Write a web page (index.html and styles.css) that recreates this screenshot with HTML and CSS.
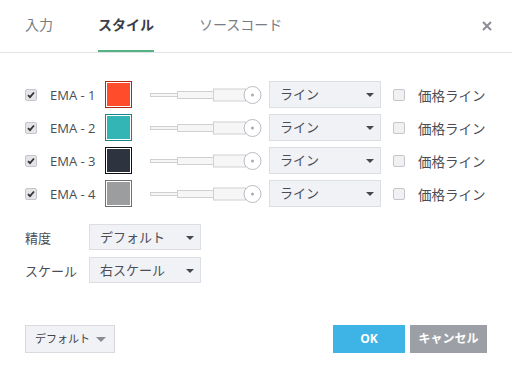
FILE: index.html
```html
<!DOCTYPE html>
<html>
    <head>
        <title>スタイル</title>
        <meta http-equiv="Content-Type" content="text/html; charset=UTF-8">
        <link rel="stylesheet" href="styles.css">
    </head>
    <body>
        <div class="dialog">
            <div class="header">
                <div class="tab">入力</div>
                <div class="tab active">スタイル</div>
                <div class="tab">ソースコード</div>
                <div class="close">
                    <svg width="10" height="10" viewBox="0 0 10 10"><path d="M1 1L9 9M9 1L1 9" stroke="#8a8d94" stroke-width="2"/></svg>
                </div>
            </div>

            <div class="content">
                <div class="rows">
                    <div class="row">
                        <span class="check on"><svg width="8" height="8" viewBox="0 0 8 8"><path d="M1 4.2L3 6.2L7 1.5" fill="none" stroke="#333" stroke-width="1.8"/></svg></span>
                        <span class="ema">EMA - 1</span>
                        <span class="swatch orange"><i></i></span>
                        <svg class="slider" width="112" height="20" viewBox="0 0 112 20">
                            <rect x="0.5" y="8.5" width="27" height="3" fill="#f6f6f6" stroke="#d0d0d0"/>
                            <rect x="27.5" y="6.5" width="36" height="7" fill="#f6f6f6" stroke="#d0d0d0"/>
                            <rect x="63.5" y="4" width="32" height="12" fill="#f6f6f6" stroke="#d0d0d0"/>
                            <circle cx="102.5" cy="10" r="8.5" fill="#fff" stroke="#b8bbc2"/>
                            <circle cx="102.5" cy="10" r="1.5" fill="#a8abb2"/>
                        </svg>
                        <div class="select wide">ライン<span class="arrow"></span></div>
                        <span class="check"></span>
                        <span class="price">価格ライン</span>
                    </div>
                    <div class="row">
                        <span class="check on"><svg width="8" height="8" viewBox="0 0 8 8"><path d="M1 4.2L3 6.2L7 1.5" fill="none" stroke="#333" stroke-width="1.8"/></svg></span>
                        <span class="ema">EMA - 2</span>
                        <span class="swatch teal"><i></i></span>
                        <svg class="slider" width="112" height="20" viewBox="0 0 112 20">
                            <rect x="0.5" y="8.5" width="27" height="3" fill="#f6f6f6" stroke="#d0d0d0"/>
                            <rect x="27.5" y="6.5" width="36" height="7" fill="#f6f6f6" stroke="#d0d0d0"/>
                            <rect x="63.5" y="4" width="32" height="12" fill="#f6f6f6" stroke="#d0d0d0"/>
                            <circle cx="102.5" cy="10" r="8.5" fill="#fff" stroke="#b8bbc2"/>
                            <circle cx="102.5" cy="10" r="1.5" fill="#a8abb2"/>
                        </svg>
                        <div class="select wide">ライン<span class="arrow"></span></div>
                        <span class="check"></span>
                        <span class="price">価格ライン</span>
                    </div>
                    <div class="row">
                        <span class="check on"><svg width="8" height="8" viewBox="0 0 8 8"><path d="M1 4.2L3 6.2L7 1.5" fill="none" stroke="#333" stroke-width="1.8"/></svg></span>
                        <span class="ema">EMA - 3</span>
                        <span class="swatch navy"><i></i></span>
                        <svg class="slider" width="112" height="20" viewBox="0 0 112 20">
                            <rect x="0.5" y="8.5" width="27" height="3" fill="#f6f6f6" stroke="#d0d0d0"/>
                            <rect x="27.5" y="6.5" width="36" height="7" fill="#f6f6f6" stroke="#d0d0d0"/>
                            <rect x="63.5" y="4" width="32" height="12" fill="#f6f6f6" stroke="#d0d0d0"/>
                            <circle cx="102.5" cy="10" r="8.5" fill="#fff" stroke="#b8bbc2"/>
                            <circle cx="102.5" cy="10" r="1.5" fill="#a8abb2"/>
                        </svg>
                        <div class="select wide">ライン<span class="arrow"></span></div>
                        <span class="check"></span>
                        <span class="price">価格ライン</span>
                    </div>
                    <div class="row">
                        <span class="check on"><svg width="8" height="8" viewBox="0 0 8 8"><path d="M1 4.2L3 6.2L7 1.5" fill="none" stroke="#333" stroke-width="1.8"/></svg></span>
                        <span class="ema">EMA - 4</span>
                        <span class="swatch gray"><i></i></span>
                        <svg class="slider" width="112" height="20" viewBox="0 0 112 20">
                            <rect x="0.5" y="8.5" width="27" height="3" fill="#f6f6f6" stroke="#d0d0d0"/>
                            <rect x="27.5" y="6.5" width="36" height="7" fill="#f6f6f6" stroke="#d0d0d0"/>
                            <rect x="63.5" y="4" width="32" height="12" fill="#f6f6f6" stroke="#d0d0d0"/>
                            <circle cx="102.5" cy="10" r="8.5" fill="#fff" stroke="#b8bbc2"/>
                            <circle cx="102.5" cy="10" r="1.5" fill="#a8abb2"/>
                        </svg>
                        <div class="select wide">ライン<span class="arrow"></span></div>
                        <span class="check"></span>
                        <span class="price">価格ライン</span>
                    </div>
                </div>

                <div class="settings">
                    <div class="setting">
                        <span class="setting-label">精度</span>
                        <div class="select">デフォルト<span class="arrow"></span></div>
                    </div>
                    <div class="setting">
                        <span class="setting-label">スケール</span>
                        <div class="select">右スケール<span class="arrow"></span></div>
                    </div>
                </div>
            </div>

            <div class="footer">
                <div class="defaults">デフォルト<span class="arrow big"></span></div>
                <div class="btn ok">OK</div>
                <div class="btn cancel">キャンセル</div>
            </div>
        </div>
    </body>
</html>
```

FILE: styles.css
```css
body {
    margin: 0;
    padding: 0;
    background: #fff;
    font-family: "Open Sans", "Noto Sans CJK JP", sans-serif;
    color: #4a4d55;
}

.dialog {
    width: 512px;
    height: 377px;
    display: flex;
    flex-direction: column;
}

/* tabs */
.header {
    display: flex;
    height: 52px;
    padding: 0 20px 0 25px;
    border-bottom: 1px solid #e0e3e8;
}

.tab {
    height: 50px;
    margin-right: 45px;
    padding-top: 14px;
    box-sizing: border-box;
    font-size: 14px;
    line-height: 22px;
    color: #787c85;
    border-bottom: 2px solid transparent;
}

.tab.active {
    font-weight: bold;
    color: #3a3e48;
    border-bottom-color: #55b386;
    height: 52px;
}

.close {
    margin-left: auto;
    padding-top: 14px;
}

/* content */
.content {
    padding: 28px 25px 0;
    font-size: 13px;
}

.rows {
    display: flex;
    flex-direction: column;
    gap: 6px;
}

.row {
    display: flex;
    align-items: center;
    height: 27px;
}

.check {
    width: 12px;
    height: 12px;
    box-sizing: border-box;
    border: 1px solid #c4c6ca;
    border-radius: 2px;
    background: #f1f1f3;
    display: flex;
    align-items: center;
    justify-content: center;
}

.check.on {
    background: #e4e5e8;
}

.ema {
    width: 55px;
    margin-left: 13px;
    color: #4a4d55;
}

.swatch {
    width: 27px;
    height: 27px;
    box-sizing: border-box;
    border: 1px solid;
    padding: 1px;
    background: #fff;
}

.swatch i {
    display: block;
    width: 100%;
    height: 100%;
}

.orange { border-color: #b02a10; }
.orange i { background: #ff4c2a; }
.teal { border-color: #188388; }
.teal i { background: #33b4b5; }
.navy { border-color: #0c0e14; }
.navy i { background: #2e3340; }
.gray { border-color: #6d6f72; }
.gray i { background: #9b9d9e; }

.slider {
    margin-left: 18px;
}

.select {
    position: relative;
    width: 112px;
    height: 27px;
    box-sizing: border-box;
    border: 1px solid #dcdee3;
    background: #f1f2f6;
    padding-left: 10px;
    line-height: 25px;
    font-size: 13px;
    color: #4a4d55;
}

.row .select {
    margin-left: 7px;
    margin-right: 12px;
}

.arrow {
    position: absolute;
    right: 6px;
    top: 11px;
    width: 0;
    height: 0;
    border-left: 4px solid transparent;
    border-right: 4px solid transparent;
    border-top: 4px solid #45484f;
}

.price {
    margin-left: 13px;
    font-size: 13.5px;
    color: #4a4d55;
}

.settings {
    margin-top: 17px;
    display: flex;
    flex-direction: column;
    gap: 7px;
}

.setting {
    display: flex;
    align-items: center;
}

.setting-label {
    width: 64px;
}

.setting .select {
    width: 112px;
    height: 26px;
    line-height: 24px;
}

/* footer */
.footer {
    margin-top: auto;
    margin-bottom: 24px;
    padding: 0 25px;
    display: flex;
    align-items: center;
}

.defaults {
    width: 90px;
    height: 28px;
    box-sizing: border-box;
    border: 1px solid #d8dadf;
    background: #f1f2f6;
    font-size: 11px;
    line-height: 26px;
    padding-left: 9px;
    position: relative;
    color: #3f4249;
}

.arrow.big {
    right: 8px;
    top: 11px;
    border-left-width: 5px;
    border-right-width: 5px;
    border-top: 5px solid #8a8c92;
}

.btn {
    height: 28px;
    line-height: 28px;
    text-align: center;
    color: #fff;
    font-size: 12px;
    font-weight: bold;
}

.ok {
    margin-left: auto;
    width: 72px;
    background: #3db4e5;
}

.cancel {
    margin-left: 5px;
    width: 77px;
    background: #9c9fa6;
}
```
